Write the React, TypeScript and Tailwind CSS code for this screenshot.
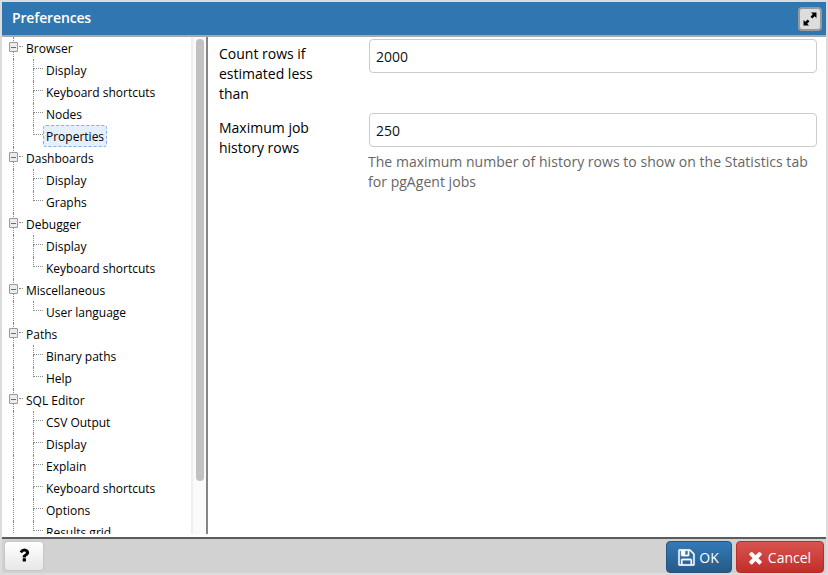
import React from "react";

type Group = { name: string; items: string[] };

const tree: Group[] = [
  { name: "Browser", items: ["Display", "Keyboard shortcuts", "Nodes", "Properties"] },
  { name: "Dashboards", items: ["Display", "Graphs"] },
  { name: "Debugger", items: ["Display", "Keyboard shortcuts"] },
  { name: "Miscellaneous", items: ["User language"] },
  { name: "Paths", items: ["Binary paths", "Help"] },
  { name: "SQL Editor", items: ["CSV Output", "Display", "Explain", "Keyboard shortcuts", "Options", "Results grid"] },
];

function GroupRow({ name }: { name: string }) {
  return (
    <div className="flex h-[22px] items-center">
      <div className="relative ml-[11px] h-full w-[13px] shrink-0 border-l border-dotted border-[#8a8a8a]">
        <span className="absolute -left-[5px] top-[5px] flex h-[10px] w-[9px] items-center justify-center rounded-[1px] border border-[#999] bg-[#ececec]">
          <span className="h-px w-[5px] bg-[#4f6fbd]" />
        </span>
        <span className="absolute left-[5px] top-[9px] w-[4px] border-t border-dotted border-[#8a8a8a]" />
      </div>
      <span className="pt-px">{name}</span>
    </div>
  );
}

function ItemRow({ name, last, selected }: { name: string; last: boolean; selected: boolean }) {
  return (
    <div className="flex h-[22px] items-center">
      <div className="ml-[11px] h-full w-[20px] shrink-0 border-l border-dotted border-[#8a8a8a]" />
      <div className="flex h-full w-[10px] shrink-0 flex-col">
        <div className="h-[10px] border-b border-l border-dotted border-[#8a8a8a]" />
        {!last && <div className="h-[12px] border-l border-dotted border-[#8a8a8a]" />}
      </div>
      <span
        className={
          selected
            ? "flex h-[22px] items-center rounded-[3px] border border-dashed border-[#84b2e8] bg-[#e5effc] px-[2px] pt-px"
            : "px-[3px] pt-px"
        }
      >
        {name}
      </span>
    </div>
  );
}

function Field({ label, value, help }: { label: string; value: string; help?: string }) {
  return (
    <div className="flex">
      <label className="w-[150px] shrink-0 pr-[40px] pt-[5px] leading-[20px] text-black">{label}</label>
      <div className="min-w-0 flex-1">
        <input
          readOnly
          value={value}
          className="block h-[34px] w-full rounded-[4px] border border-[#ccc] bg-white px-[6px] pt-px text-[14px] text-[#111] outline-none"
        />
        {help && <p className="-ml-px mt-[5px] w-[448px] leading-[20px] tracking-[0.035px] text-[#666]">{help}</p>}
      </div>
    </div>
  );
}

export default function App() {
  return (
    <div className="flex h-[575px] w-[828px] flex-col overflow-hidden border-2 border-[#dcdcdc] bg-white font-['Open_Sans',sans-serif] text-[14px]">
      <header className="flex h-[35px] shrink-0 items-center justify-between border-b-2 border-[#a8a8a8] bg-[#3077b2] pl-[10px] pr-1">
        <h1 className="pb-[2px] text-[14px] font-semibold tracking-[-0.15px] text-white">Preferences</h1>
        <button className="flex h-[24px] w-[24px] items-center justify-center rounded-[4px] border-2 border-[#999] bg-[#ddd]">
          <svg width="14" height="14" viewBox="0 0 13 13" fill="#000">
            <path d="M7.4 0.5h5.1v5.1L10.8 3.9 8.7 6 7 4.3l2.1-2.1zM5.6 12.5H.5V7.4l1.7 1.7L4.3 7 6 8.7l-2.1 2.1z" />
          </svg>
        </button>
      </header>
      <main className="flex h-[497px] shrink-0 overflow-hidden">
        <nav className="w-[189px] shrink-0 overflow-hidden text-[12px] text-black">
          {tree.map((g) => (
            <div key={g.name}>
              <GroupRow name={g.name} />
              {g.items.map((item, i) => (
                <ItemRow key={item} name={item} last={i === g.items.length - 1} selected={item === "Properties"} />
              ))}
            </div>
          ))}
        </nav>
        <div className="flex w-[15px] shrink-0 justify-center border-l-2 border-[#eee] bg-[#fafafa] pt-[2px]">
          <div className="h-[442px] w-[8px] rounded-full bg-[#c1c1c1]" />
        </div>
        <section className="flex-1 border-l-2 border-[#858585] pl-[11px] pr-[9px] pt-[2px]">
          <div className="flex flex-col gap-[9px]">
            <Field label="Count rows if estimated less than" value="2000" />
            <Field
              label="Maximum job history rows"
              value="250"
              help="The maximum number of history rows to show on the Statistics tab for pgAgent jobs"
            />
          </div>
        </section>
      </main>
      <footer className="mt-[3px] flex h-[36px] shrink-0 items-start border-t-2 border-[#5c5c5c] bg-[#d2d2d2] pl-[3px] pt-[3px]">
        <button className="flex h-[28px] w-[38px] items-center justify-center rounded-[3px] bg-linear-to-b from-white to-[#e7e7e7] shadow-[0_0_2px_#aaa]">
          <svg width="18" height="18" viewBox="0 0 1792 1792" fill="#000" className="-mt-[2px]">
            <path d="M1088 1256v240q0 16-12 28t-28 12h-240q-16 0-28-12t-12-28v-240q0-16 12-28t28-12h240q16 0 28 12t12 28zm316-600q0 54-15.5 101t-35 76.5-55 59.5-57.5 43.5-61 35.5q-41 23-68.5 65t-27.5 67q0 17-12 32.5t-28 15.5h-240q-15 0-25.5-18.5t-10.5-37.5v-45q0-83 65-156.5t143-108.5q59-27 84-56t25-76q0-42-46.5-74t-107.5-32q-65 0-108 29-35 25-107 115-13 16-31 16-12 0-25-8l-164-125q-13-10-15.5-25t5.5-28q160-266 464-266 80 0 161 31t146 83 106 127.5 41 158.5z" />
          </svg>
        </button>
        <button className="ml-auto -mt-px flex h-[32px] w-[66px] items-center justify-center gap-[3px] rounded-[4px] border border-[#245580] bg-linear-to-b from-[#337ab7] to-[#265a88] pr-[2px] text-[14px] font-medium text-white">
          <svg width="19" height="19" viewBox="0 0 1792 1792" fill="currentColor" stroke="currentColor" strokeWidth="30">
            <path d="M512 1536h768v-384h-768v384zm896 0h128v-896q0-14-10-38.5t-20-34.5l-281-281q-10-10-34-20t-39-10v416q0 40-28 68t-68 28h-576q-40 0-68-28t-28-68v-416h-128v1280h128v-416q0-40 28-68t68-28h832q40 0 68 28t28 68v416zm-384-928v-320q0-13-9.5-22.5t-22.5-9.5h-192q-13 0-22.5 9.5t-9.5 22.5v320q0 13 9.5 22.5t22.5 9.5h192q13 0 22.5-9.5t9.5-22.5zm640 32v928q0 40-28 68t-68 28h-1344q-40 0-68-28t-28-68v-1344q0-40 28-68t68-28h928q40 0 88 20t76 48l280 280q28 28 48 76t20 88z" />
          </svg>
          OK
        </button>
        <button className="-mt-px ml-1 mr-[2px] flex h-[32px] w-[88px] items-center justify-center gap-[3px] rounded-[4px] border border-[#b92c28] bg-linear-to-b from-[#d9534f] to-[#c12e2a] pr-[3px] text-[14px] font-medium text-white">
          <svg width="19" height="19" viewBox="0 0 1792 1792" fill="currentColor">
            <path d="M1490 1322q0 40-28 68l-136 136q-28 28-68 28t-68-28l-294-294-294 294q-28 28-68 28t-68-28l-136-136q-28-28-28-68t28-68l294-294-294-294q-28-28-28-68t28-68l136-136q28-28 68-28t68 28l294 294 294-294q28-28 68-28t68 28l136 136q28 28 28 68t-28 68l-294 294 294 294q28 28 28 68z" />
          </svg>
          Cancel
        </button>
      </footer>
    </div>
  );
}
